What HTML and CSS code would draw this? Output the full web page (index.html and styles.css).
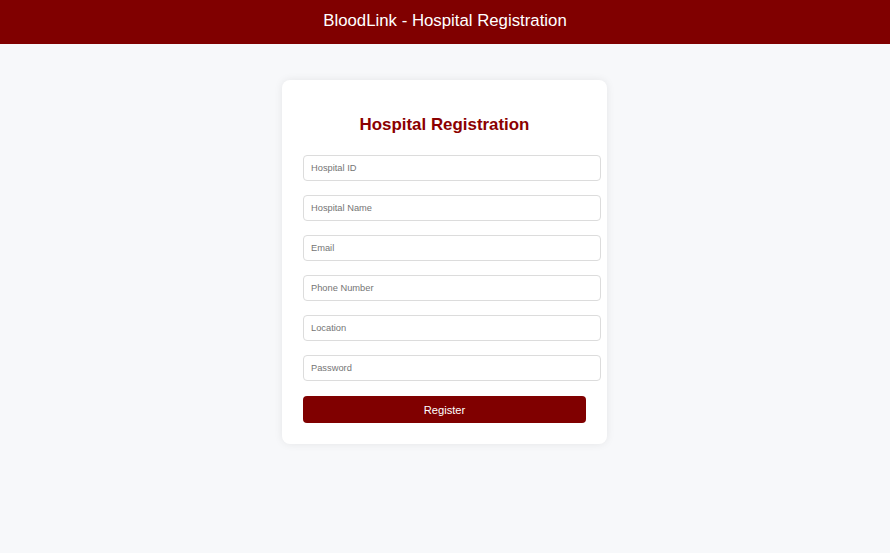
FILE: index.html
```html
<!DOCTYPE html>
<html lang="en">
<head>
<meta charset="UTF-8">
<title>BloodLink - Hospital Registration</title>
<link rel="stylesheet" href="styles.css">
</head>
<body>
<header class="topbar">BloodLink - Hospital Registration</header>
<main class="page">
  <form class="card">
    <h2 class="card-title">Hospital Registration</h2>
    <input class="field" type="text" placeholder="Hospital ID">
    <input class="field" type="text" placeholder="Hospital Name">
    <input class="field" type="email" placeholder="Email">
    <input class="field" type="text" placeholder="Phone Number">
    <input class="field" type="text" placeholder="Location">
    <input class="field" type="password" placeholder="Password">
    <button class="btn" type="button">Register</button>
  </form>
</main>
</body>
</html>
```
FILE: styles.css
```css
* { box-sizing: border-box; }
html, body { margin: 0; padding: 0; }
body {
  background: #f7f8fa;
  font-family: "Liberation Sans", Arial, sans-serif;
  min-height: 553px;
}
.topbar {
  background: #800000;
  color: #ffffff;
  height: 44px;
  display: flex;
  align-items: center;
  justify-content: center;
  font-size: 16.8px;
  padding-bottom: 2px;
}
.page {
  display: flex;
  justify-content: center;
  padding-top: 36px;
  padding-right: 1px;
}
.card {
  width: 325px;
  background: #ffffff;
  border-radius: 8px;
  box-shadow: 0 0 8px rgba(0, 0, 0, 0.08);
  padding: 20px 21px 21px 21px;
  display: flex;
  flex-direction: column;
}
.card-title {
  margin: 14px 0 20px;
  color: #8b0000;
  font-size: 16.9px;
  line-height: 21px;
  font-weight: bold;
  text-align: center;
}
.field {
  width: 298px;
  height: 26px;
  margin-bottom: 14px;
  padding: 0 7px;
  border: 1px solid #dcdcdc;
  border-radius: 4px;
  font-family: "Liberation Sans", Arial, sans-serif;
  font-size: 9.3px;
  color: #333;
  background: #fff;
}
.field::placeholder { color: #757575; }
.field:last-of-type { margin-bottom: 15px; }
.btn {
  width: 283px;
  height: 27px;
  background: #800000;
  color: #ffffff;
  border: none;
  border-radius: 4px;
  font-family: "Liberation Sans", Arial, sans-serif;
  font-size: 11.2px;
  cursor: pointer;
}
```
